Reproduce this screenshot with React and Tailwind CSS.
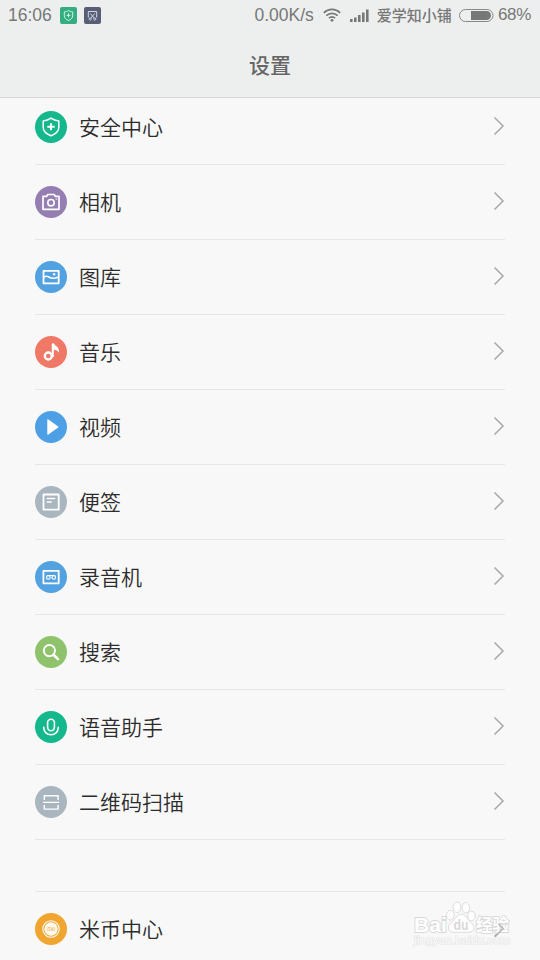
const ICONS = {
  security: (
    <>
      <path d="M16 7.2c2.6 1.9 5 2.5 7.8 2.7v6.6c0 3.9-3.2 6.4-7.8 8.3-4.6-1.9-7.8-4.4-7.8-8.3V9.9c2.8-.2 5.2-.8 7.8-2.7Z" strokeWidth="1.5" />
      <path d="M16 12.9v5.7M13.1 15.7h5.8" strokeWidth="2" />
    </>
  ),
  camera: (
    <>
      <path d="M8 10.4h3.5l1.4-1.9h6.2l1.4 1.9H24V23.3H8Z" strokeWidth="1.7" />
      <circle cx="16" cy="16.7" r="3.2" strokeWidth="1.6" />
      <path d="M21 13h.8" strokeWidth="1.2" />
    </>
  ),
  gallery: (
    <>
      <path d="M8.5 9.9h15.2v12.4H8.5Z" strokeWidth="1.8" />
      <path d="M9 16c1.8-1.2 3-1.2 4.8 0 1.9 1.3 5.3 1.8 9.2.3" strokeWidth="1.6" />
      <circle cx="19.1" cy="13.2" r="1.2" fill="#fff" stroke="none" />
    </>
  ),
  music: (
    <>
      <circle cx="13.3" cy="20" r="3.5" strokeWidth="2.3" />
      <path d="M17.8 20.2V8.6" strokeWidth="2.1" />
      <path d="M17 7.6h2c.6 2.5 6.1 3.3 4.8 9.2-.9-2.3-2.9-3-4.9-3.1Z" fill="#fff" stroke="none" />
    </>
  ),
  video: <path d="M13 9v14l9.7-7Z" fill="#fff" strokeWidth="1.4" />,
  notes: (
    <>
      <path d="M8.5 8.5h15.2v15.2H8.5Z" strokeWidth="1.8" />
      <path d="M12.4 12.5h7.2M12.4 16h3.8" strokeWidth="1.6" />
    </>
  ),
  recorder: (
    <>
      <path d="M8.4 9.9h15.3v12.4H8.4Z" strokeWidth="1.8" />
      <circle cx="13.3" cy="16.4" r="1.8" strokeWidth="1.2" />
      <circle cx="18.8" cy="16.4" r="1.8" strokeWidth="1.2" />
      <path d="M12.6 14.5h7" strokeWidth="1.2" />
    </>
  ),
  search: (
    <>
      <circle cx="14.4" cy="14.6" r="5.6" strokeWidth="1.9" />
      <path d="m18.8 19 4.2 4.2" strokeWidth="2.6" />
    </>
  ),
  voice: (
    <>
      <rect x="12.6" y="8.2" width="6.8" height="11.5" rx="3.4" strokeWidth="1.6" />
      <path d="M8.7 16.2c.3 4.8 3.3 7.5 7.3 7.5s7-2.700 7.3-7.5" strokeWidth="1.6" />
    </>
  ),
  scan: <path d="M9.3 13.9V9.7h13.8v4.2M8 16.4h16.2M9.3 18.9v4.200h13.8v-4.200" strokeWidth="1.4" strokeLinecap="butt" />,
  coin: (
    <>
      <circle cx="16" cy="16" r="8.2" strokeWidth="1.1" />
      <circle cx="16" cy="16" r="6.7" fill="#fff" fillOpacity=".93" stroke="none" />
      <path d="M12.9 17.7v-3.200h2.400q1 0 1 1v2.200M14.600 15.800v1.900M17.700 14.500v3.200M19.200 14.500v3.200" stroke="#f3bd66" strokeWidth=".8" />
    </>
  ),
};

const APPS = [
  { icon: "security", label: "安全中心", color: "bg-[#14b88c]" },
  { icon: "camera", label: "相机", color: "bg-[#957fb2]" },
  { icon: "gallery", label: "图库", color: "bg-[#52a2e2]" },
  { icon: "music", label: "音乐", color: "bg-[#f07866]" },
  { icon: "video", label: "视频", color: "bg-[#4ea0e6]" },
  { icon: "notes", label: "便签", color: "bg-[#a9b6bf]" },
  { icon: "recorder", label: "录音机", color: "bg-[#52a2e2]" },
  { icon: "search", label: "搜索", color: "bg-[#8fc36b]" },
  { icon: "voice", label: "语音助手", color: "bg-[#14b88c]" },
  { icon: "scan", label: "二维码扫描", color: "bg-[#a9b6bf]" },
];

function Row({ icon, label, color }) {
  return (
    <li className="flex h-[75px] shrink-0 items-center border-b border-[#e6e6e6]">
      <span className={`h-8 w-8 rounded-full ${color}`}>
        <svg className="h-8 w-8" viewBox="0 0 32 32" fill="none" stroke="#fff" strokeLinejoin="round" strokeLinecap="round">
          {ICONS[icon]}
        </svg>
      </span>
      <span className="ml-3 pb-[3px] text-[21px] leading-8 font-[350] text-[#2c2c2c]">{label}</span>
      <svg className="mb-0.5 ml-auto h-5 w-3" viewBox="0 0 12 20" fill="none" stroke="#a8a8a8" strokeWidth="1.5">
        <path d="m1.5 1.5 8.5 8.5-8.5 8.5" />
      </svg>
    </li>
  );
}

function StatusBar() {
  return (
    <div className="flex h-[30px] items-center text-[#777] whitespace-nowrap">
      <span className="ml-2 w-[52px] text-[17.5px] font-['Liberation_Sans',sans-serif]">16:06</span>
      <svg className="h-[17px] w-[17px]" viewBox="0 0 17 17" fill="none" stroke="#d9fff0">
        <rect width="17" height="17" rx="2" fill="#36ad80" stroke="none" />
        <path d="M8.5 3.500c1.500 1 2.700 1.300 4.200 1.400v4c0 2-1.700 3.500-4.200 4.600-2.500-1.100-4.200-2.600-4.200-4.600v-4c1.500-.1 2.700-.4 4.200-1.400ZM8.500 6.300v4M6.500 8.300h4" strokeWidth=".9" />
      </svg>
      <svg className="ml-[7px] h-[17px] w-[17px]" viewBox="0 0 17 17" fill="none" stroke="#dfe2ee">
        <rect width="17" height="17" rx="2" fill="#575e75" stroke="none" />
        <path d="M5 10H4.3V4.500h8.400V10H12M6.300 6.500l4 4.700M10.700 6.500l-4 4.700" strokeWidth=".9" />
        <circle cx="6.2" cy="12" r="1.1" strokeWidth=".8" />
        <circle cx="10.8" cy="12" r="1.1" strokeWidth=".8" />
      </svg>
      <span className="ml-auto text-[17.5px] font-['Liberation_Sans',sans-serif]">0.00K/s</span>
      <svg className="ml-[9px] h-[14px] w-[18px]" viewBox="0 0 18 14" fill="none" stroke="#777" strokeWidth="1.7">
        <path d="M.8 4.800c4.700-4.500 11.700-4.500 16.400 0M3.300 7.600c3.300-3.100 8.100-3.100 11.400 0M5.900 10.200c1.900-1.700 4.300-1.700 6.200 0" />
        <circle cx="9" cy="12.300" r="1.4" fill="#777" stroke="none" />
      </svg>
      <svg className="ml-[9px] h-[13px] w-[19px]" viewBox="0 0 19 13" fill="#777">
        <path d="M0 10h2.600v3H0ZM4 8.500h2.600V13H4ZM8 6h2.600v7H8ZM12 3.500h2.600V13H12ZM16 .5h2.600V13H16Z" />
      </svg>
      <span className="ml-2 text-[15px] font-medium">爱学知小铺</span>
      <svg className="ml-[7px] h-[13px] w-[35px]" viewBox="0 0 35 13" fill="none">
        <rect x=".5" y=".5" width="33.5" height="12" rx="6" stroke="#888" />
        <path d="M12 2h15.500a4.500 4.500 0 0 1 0 9H12Z" fill="#777" />
      </svg>
      <span className="mr-[9px] ml-1 text-[17px] tracking-[-0.3px] font-['Liberation_Sans',sans-serif]">68%</span>
    </div>
  );
}

function Watermark() {
  return (
    <svg className="absolute top-[900px] left-[412px] h-12 w-[104px]" viewBox="0 0 104 48" fill="#fff" fillOpacity=".8" stroke="#d8d8d8" strokeWidth=".9">
      <path d="M49.3 14.300c4.500 0 5.500 5 9.500 8 5 4 4 10-2 10H42c-6.500 0-7.500-6.500-2.500-10 4-3 5.300-8 9.800-8Z" />
      <ellipse cx="38.3" cy="15.2" rx="3.9" ry="4.8" />
      <ellipse cx="45" cy="7.3" rx="3.9" ry="5.2" />
      <ellipse cx="53.8" cy="7.8" rx="3.9" ry="5.2" />
      <ellipse cx="59.5" cy="16" rx="3.9" ry="4.8" />
      <g fontFamily="Liberation Sans, Noto Sans CJK SC, sans-serif" paintOrder="stroke" opacity=".99">
        <text x="2" y="31.5" fontSize="21" fontWeight="700" strokeWidth="1.8" fillOpacity="1" textLength="33" lengthAdjust="spacingAndGlyphs">Bai</text>
        <text x="41.5" y="29.5" fontSize="15" fontWeight="700" fill="#cfcfcf" stroke="none" textLength="15" lengthAdjust="spacingAndGlyphs">du</text>
        <text x="64" y="31" fontSize="17" fontWeight="700" strokeWidth="1.8" fillOpacity="1" textLength="33" lengthAdjust="spacingAndGlyphs">经验</text>
        <text x="2" y="44" fontSize="11" stroke="#e6e6e6" strokeWidth="1.2" textLength="96" lengthAdjust="spacingAndGlyphs">jingyan.baidu.com</text>
      </g>
      <path d="m86.5 24 4.500 4.500-8 8.500" fill="none" stroke="#b0b0b0" strokeWidth="1.3" />
    </svg>
  );
}

export default function App() {
  return (
    <div className="relative flex h-[960px] w-[540px] flex-col overflow-hidden bg-[#f8f8f8] font-['Noto_Sans_CJK_SC',sans-serif]">
      <header className="h-[98px] shrink-0 border-b border-[#d6d8d8] bg-[#edefef]">
        <StatusBar />
        <h1 className="mt-[18px] text-center text-[21px] leading-8 font-medium text-[#666]">设置</h1>
      </header>
      <main className="min-h-0 flex-1 overflow-hidden">
        <ul className="-mt-2 px-[35px]">
          {APPS.map((app) => (
            <Row key={app.label} {...app} />
          ))}
          <li className="h-[52px] border-b border-[#e6e6e6]" />
          <Row icon="coin" label="米币中心" color="bg-[#f0a530]" />
        </ul>
      </main>
      <Watermark />
    </div>
  );
}
